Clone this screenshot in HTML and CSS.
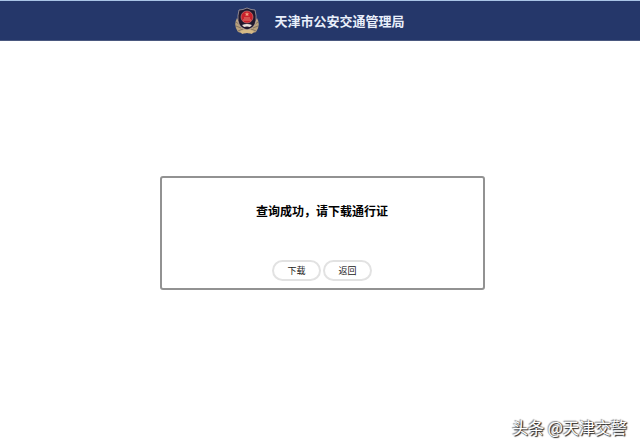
FILE: index.html
```html
<!DOCTYPE html>
<html lang="zh-CN">
<head>
    <meta charset="UTF-8">
    <meta name="viewport" content="width=device-width, initial-scale=1.0">
    <title>天津市公安交通管理局</title>
    <link rel="stylesheet" href="styles.css">
</head>
<body>
    <header class="header">
        <svg class="badge" viewBox="0 0 24 28" aria-hidden="true">
            <path d="M2 11 Q-2 18 3 25 Q8 27 12 26 Q16 27 21 25 Q26 18 22 11 L18 20 L12 23 L6 20 Z" fill="#b9a17c"/>
            <path d="M1 15 L5 18 M1 19 L6 21 M3 24 L8 22 M23 15 L19 18 M23 19 L18 21 M21 24 L16 22" stroke="#6f6257" stroke-width="0.7"/>
            <path d="M12 1 Q16 3 20 3 Q23 15 18 20 Q15 22 12 23 Q9 22 6 20 Q1 15 4 3 Q8 3 12 1 Z" fill="#20182d" stroke="#d9c7bd" stroke-width="0.6"/>
            <circle cx="12" cy="10" r="6" fill="#c9202b" stroke="#d58582" stroke-width="0.6"/>
            <path d="M12 5 L12.6 6.5 H14.5 L13 7.6 L13.5 9.3 L12 8.3 L10.5 9.3 L11 7.6 L9.5 6.5 H11.4 Z" fill="#f5a27f"/>
            <path d="M9 11 H15 M8 13 H16" stroke="#e99a86" stroke-width="0.8"/>
            <path d="M7 18 Q12 16 17 18 L15 20 Q12 19 9 20 Z" fill="#e9e2dc"/>
            <path d="M5 24 Q12 21 19 24 L17 27 Q12 25 7 27 Z" fill="#d5b986"/>
        </svg>
        <h1>天津市公安交通管理局</h1>
    </header>

    <main class="content">
        <section class="result">
            <p class="message">查询成功，请下载通行证</p>
            <div class="actions">
                <button type="button" class="btn">下载</button>
                <button type="button" class="btn">返回</button>
            </div>
        </section>
    </main>

    <div class="watermark">头条 @天津交警</div>
</body>
</html>
```

FILE: styles.css
```css
:root {
    --primary: #25376a;
    --line: #929292;
    --btn-line: #e2e2e2;
}

* {
    margin: 0;
    padding: 0;
    box-sizing: border-box;
}

body {
    font-family: "Noto Sans CJK SC", sans-serif;
    background: #fff;
    color: #000;
    min-height: 100vh;
    position: relative;
}

.header {
    display: flex;
    align-items: center;
    justify-content: center;
    gap: 15px;
    height: 41px;
    background: var(--primary);
    border-top: 1px solid #a9c4e6;
    border-bottom: 1px solid #4a587f;
}

.badge {
    width: 24px;
    height: 28px;
}

.header h1 {
    color: #e9effb;
    font-size: 13px;
    line-height: 20px;
    font-weight: 700;
}

.content {
    padding: 135px 16px 0 20px;
}

.result {
    max-width: 325px;
    margin: 0 auto;
    padding: 23px 16px 7px;
    border: 2px solid var(--line);
    border-radius: 3px;
    text-align: center;
}

.message {
    font-size: 12px;
    line-height: 20px;
    font-weight: 700;
}

.actions {
    display: flex;
    justify-content: center;
    gap: 2px;
    margin-top: 39px;
}

.btn {
    width: 49px;
    height: 21px;
    border: 2px solid var(--btn-line);
    border-radius: 11px;
    background: #fff;
    color: #222;
    font-family: inherit;
    font-size: 9px;
    line-height: 16px;
    cursor: pointer;
}

.btn:hover {
    background: #f5f5f5;
}

.watermark {
    position: absolute;
    right: 13px;
    bottom: 9px;
    color: #fff;
    font-size: 16px;
    line-height: 24px;
    text-shadow: 1px 1px 1px #222, -1px -1px 1px #888, 1px 0 1px #555;
}
```
